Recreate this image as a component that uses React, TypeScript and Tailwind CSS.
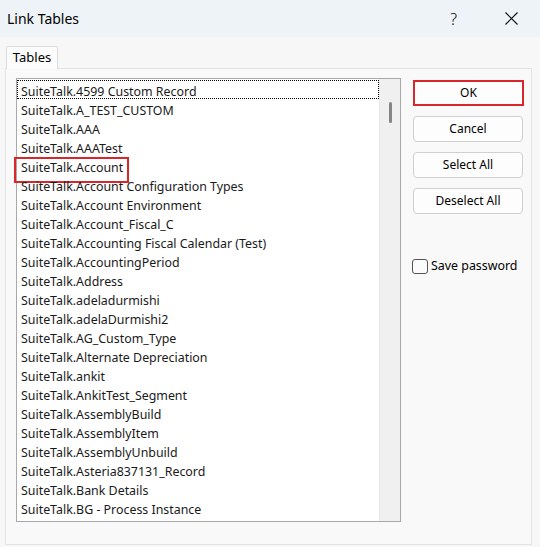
import React from "react";

const tables = [
  "SuiteTalk.4599 Custom Record",
  "SuiteTalk.A_TEST_CUSTOM",
  "SuiteTalk.AAA",
  "SuiteTalk.AAATest",
  "SuiteTalk.Account",
  "SuiteTalk.Account Configuration Types",
  "SuiteTalk.Account Environment",
  "SuiteTalk.Account_Fiscal_C",
  "SuiteTalk.Accounting Fiscal Calendar (Test)",
  "SuiteTalk.AccountingPeriod",
  "SuiteTalk.Address",
  "SuiteTalk.adeladurmishi",
  "SuiteTalk.adelaDurmishi2",
  "SuiteTalk.AG_Custom_Type",
  "SuiteTalk.Alternate Depreciation",
  "SuiteTalk.ankit",
  "SuiteTalk.AnkitTest_Segment",
  "SuiteTalk.AssemblyBuild",
  "SuiteTalk.AssemblyItem",
  "SuiteTalk.AssemblyUnbuild",
  "SuiteTalk.Asteria837131_Record",
  "SuiteTalk.Bank Details",
  "SuiteTalk.BG - Process Instance",
];

const buttons = ["Cancel", "Select All", "Deselect All"];

export default function App() {
  return (
    <div className="flex h-[547px] w-[540px] flex-col overflow-hidden bg-[#f7f7f7] font-['Noto_Sans',sans-serif] text-[12px] text-[#1a1a1a]">
      {/* title bar */}
      <div className="flex h-[37px] shrink-0 items-center bg-[#eef3f8]">
        <span className="pl-[7px] text-[14px] text-black">Link Tables</span>
        <span className="ml-auto mr-[48px] text-[16px] font-light text-black">?</span>
        <svg className="mr-[22px] h-[13px] w-[13px]" viewBox="0 0 13 13" fill="none" stroke="#111" strokeWidth="1.1">
          <line x1="0.5" y1="0.5" x2="12.5" y2="12.5" />
          <line x1="12.5" y1="0.5" x2="0.5" y2="12.5" />
        </svg>
      </div>

      {/* tabs */}
      <div className="flex flex-col pl-[5px] pt-[9px]">
        <div className="relative z-10 ml-px flex h-[23px] w-[52px] items-center justify-center rounded-t-[2px] border border-b-0 border-[#dcdcdc] bg-[#fcfcfc] text-[13px] text-black">
          Tables
        </div>
        <div className="-mt-px flex h-[477px] w-[527px] gap-[12px] border border-[#e3e3e3] bg-[#f9f9f9] pl-[10px] pt-[9px]">
          {/* listbox */}
          <div className="flex h-[444px] w-[385px] border border-[#a9a9a9] bg-white">
            <div className="flex flex-1 flex-col pt-px text-[12.4px]">
              {tables.map((name, i) => (
                <div
                  key={name}
                  className={
                    i === 0
                      ? "relative h-[19px] whitespace-nowrap pl-[4px] pt-[5px] leading-[14px] outline-1 -outline-offset-1 outline-dotted outline-black"
                      : "relative h-[19px] whitespace-nowrap pl-[4px] pt-[5px] leading-[14px]"
                  }
                >
                  {name}
                  {name === "SuiteTalk.Account" && (
                    <span className="absolute left-[-3px] top-[1px] h-[26px] w-[115px] border-2 border-[#d9262b]" />
                  )}
                </div>
              ))}
            </div>
            <div className="flex w-[21px] shrink-0 justify-center border-l border-[#e8e8e8] bg-[#f0f0f0] pt-[23px]">
              <div className="h-[21px] w-[3px] rounded-full bg-[#858585]" />
            </div>
          </div>

          {/* buttons */}
          <div className="flex w-[111px] flex-col pt-[2px]">
            <button
              type="button"
              className="h-[26px] w-[111px] border-2 border-[#d9262b] bg-[#fdfdfd] text-[12px] text-black"
            >
              OK
            </button>
            {buttons.map((label) => (
              <button
                key={label}
                type="button"
                className="mt-[10px] h-[26px] w-[110px] rounded-[4px] border border-[#d0d0d0] bg-[#fdfdfd] text-[12px] text-black"
              >
                {label}
              </button>
            ))}
            <label className="mt-[43px] flex items-center gap-[3px] text-[12.4px] text-black">
              <span className="-ml-px h-[15px] w-[16px] rounded-[3px] border border-[#555] bg-[#fbfbfb]" />
              Save password
            </label>
          </div>
        </div>
      </div>
    </div>
  );
}
